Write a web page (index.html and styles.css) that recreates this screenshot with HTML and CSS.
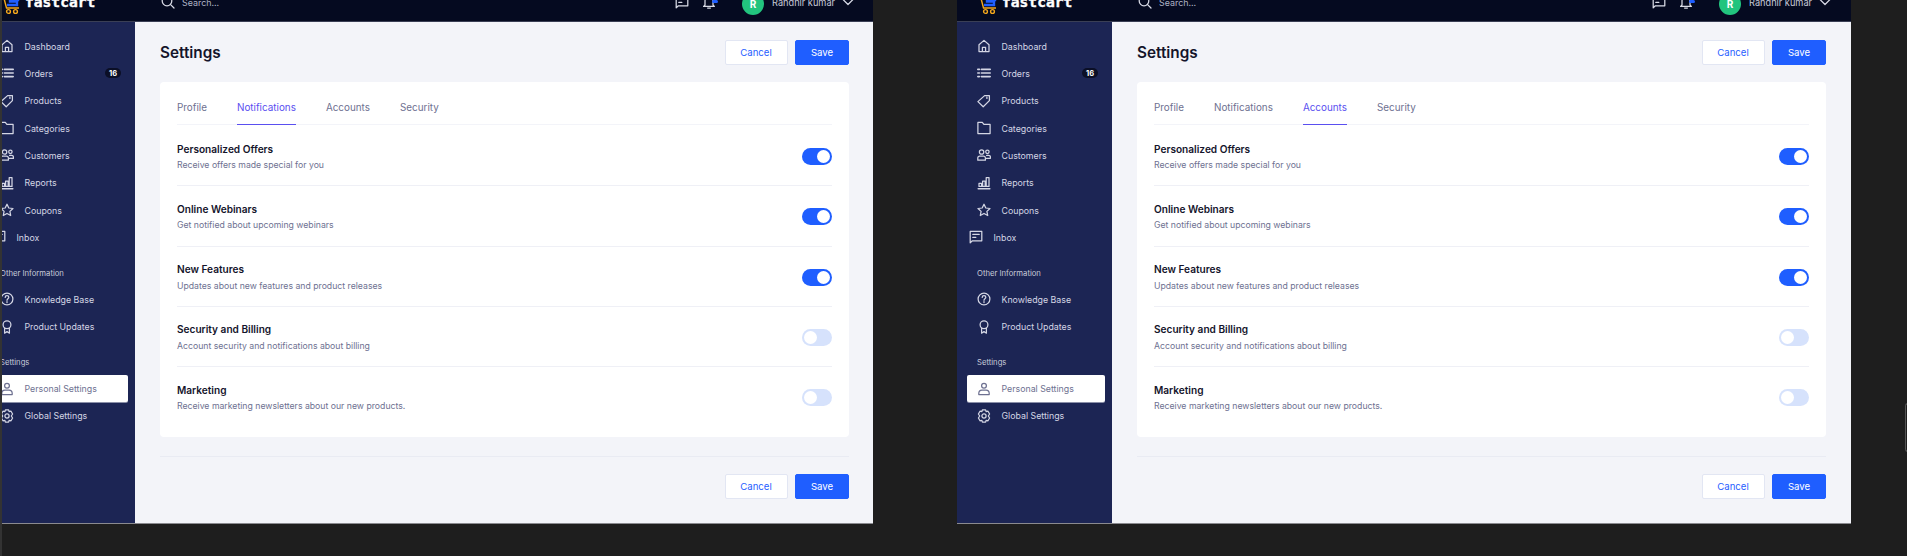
FILE: index.html

```html
<!DOCTYPE html>
<html lang="en">
<head>
    <meta charset="UTF-8">
    <title>fastcart settings</title>
    <link rel="stylesheet" href="styles.css">
</head>
<body>

<svg class="defs" width="0" height="0">
    <symbol id="i-home" viewBox="0 0 14 14"><path d="M2 12.6V5.800L7 1.400l5 4.400v6.800zM5.400 12.600V8.400h3.200v4.200"/></symbol>
    <symbol id="i-list" viewBox="0 0 14 14"><path d="M4.400 3.400h8.800M4.400 7h8.800M4.400 10.600h8.800M.8 3.400h1.600M.8 7h1.600M.8 10.600h1.600" stroke-width="1.6"/></symbol>
    <symbol id="i-tag" viewBox="0 0 14 14"><path d="M7.600 1.600h4.800v5L6.200 12.800.9 7.600zM9.900 3.200v1.200"/></symbol>
    <symbol id="i-folder" viewBox="0 0 14 14"><path d="M.9 1.400h4.400l1.600 2h6.200v9.200H.9z"/></symbol>
    <symbol id="i-users" viewBox="0 0 14 14"><circle cx="4.600" cy="4" r="2.200"/><circle cx="10.400" cy="3.800" r="1.700"/><path d="M.8 12.200V10c0-1.200 1-1.900 2-1.900h3.600c1 0 2 .7 2 1.900v2.200zM9.600 7.400h2.200c1 0 1.600.6 1.600 1.600v1.400h-4"/></symbol>
    <symbol id="i-chart" viewBox="0 0 14 14"><path d="M1.200 12.800h11.600" stroke-width="1.5"/><path d="M2 10.400V7.400h2.600v3zM5.600 10.400V5h2.600v5.400zM9.200 10.400V1.600h2.800v8.800z"/></symbol>
    <symbol id="i-star" viewBox="0 0 14 14"><path d="M7 1.200l1.800 3.800 4.200.5-3.100 2.900.8 4.100L7 10.500l-3.700 2 .8-4.100L1 5.500l4.200-.5z"/></symbol>
    <symbol id="i-chat" viewBox="0 0 14 14"><path d="M1.200 1.400h11.600v9.400H3.400L1.200 12.800zM3.800 4.400h6.400M3.800 7.400h3"/></symbol>
    <symbol id="i-help" viewBox="0 0 14 14"><circle cx="7" cy="7" r="5.900"/><path d="M5.200 5.400C5.200 4.300 6 3.700 7 3.700s1.800.7 1.800 1.600c0 1.400-1.800 1.500-1.800 3M7 9.600v1"/></symbol>
    <symbol id="i-award" viewBox="0 0 14 14"><circle cx="7" cy="4.800" r="3.900"/><path d="M4.600 8.200v5l2.400-1.600 2.400 1.600v-5"/></symbol>
    <symbol id="i-user" viewBox="0 0 14 14"><circle cx="7" cy="3.800" r="2.400"/><path d="M1.800 12.600v-1.400c0-2 1.600-3.200 3.200-3.200h4c1.600 0 3.200 1.200 3.200 3.200v1.400z"/></symbol>
    <symbol id="i-gear" viewBox="0 0 14 14"><path d="M5.400.9h3.200l.5 1.800 1.900-.5L12.600 5l-1.300 2 1.300 2-1.600 2.800-1.900-.5-.5 1.800H5.400l-.5-1.800-1.900.5L1.400 9l1.300-2-1.300-2L3 2.200l1.900.5z"/><circle cx="7" cy="7" r="2.100"/></symbol>
    <symbol id="i-search" viewBox="0 0 14 14"><circle cx="6" cy="6" r="4.800"/><path d="M9.600 9.600l3.400 3.400"/></symbol>
    <symbol id="i-bell" viewBox="0 0 14 14"><path d="M3 10V6a4 4 0 0 1 8 0v4l1.400 1.400H1.600zM5.600 13h2.800"/></symbol>
    <symbol id="i-chevron" viewBox="0 0 14 14"><path d="M2 4.500l5 5 5-5"/></symbol>
    <symbol id="i-cart" viewBox="0 0 22 22"><path class="cart-frame" d="M1 1.500h3l3.500 13.500h12.500"/><path class="cart-load" d="M6 3.500h13v3.500h-8v1.500h7v3.500H8"/><circle class="cart-frame" cx="9.500" cy="18.500" r="1.900"/><circle class="cart-frame" cx="16.500" cy="18.500" r="1.900"/></symbol>
</svg>

<!-- left window, its first 22px are cut off by the capture -->
<div class="capture capture-left">
    <div class="window">
        <header class="topbar">
            <div class="brand"><svg class="cart"><use href="#i-cart"/></svg><span class="brand-name">fastcart</span></div>
            <div class="search"><svg class="ico"><use href="#i-search"/></svg><span>Search...</span></div>
            <div class="topbar-right">
                <svg class="ico"><use href="#i-chat"/></svg>
                <span class="bell"><svg class="ico"><use href="#i-bell"/></svg><i class="bell-dot"></i></span>
                <span class="avatar">R</span>
                <span class="username">Randhir kumar</span>
                <svg class="ico chevron"><use href="#i-chevron"/></svg>
            </div>
        </header>
        <div class="body">
            <nav class="sidebar">
                <a class="nav-item"><svg class="ico"><use href="#i-home"/></svg>Dashboard</a>
                <a class="nav-item"><svg class="ico"><use href="#i-list"/></svg>Orders<span class="count">16</span></a>
                <a class="nav-item"><svg class="ico"><use href="#i-tag"/></svg>Products</a>
                <a class="nav-item"><svg class="ico"><use href="#i-folder"/></svg>Categories</a>
                <a class="nav-item"><svg class="ico"><use href="#i-users"/></svg>Customers</a>
                <a class="nav-item"><svg class="ico"><use href="#i-chart"/></svg>Reports</a>
                <a class="nav-item"><svg class="ico"><use href="#i-star"/></svg>Coupons</a>
                <a class="nav-item nav-inbox"><svg class="ico"><use href="#i-chat"/></svg>Inbox</a>
                <div class="nav-label">Other Information</div>
                <a class="nav-item"><svg class="ico"><use href="#i-help"/></svg>Knowledge Base</a>
                <a class="nav-item"><svg class="ico"><use href="#i-award"/></svg>Product Updates</a>
                <div class="nav-label">Settings</div>
                <a class="nav-item active"><svg class="ico"><use href="#i-user"/></svg>Personal Settings</a>
                <a class="nav-item"><svg class="ico"><use href="#i-gear"/></svg>Global Settings</a>
            </nav>
            <main class="main">
                <div class="page-head">
                    <h1>Settings</h1>
                    <div class="actions"><button class="btn">Cancel</button><button class="btn btn-primary">Save</button></div>
                </div>
                <section class="card">
                    <div class="tabs">
                        <a class="tab">Profile</a>
                        <a class="tab tab-active">Notifications</a>
                        <a class="tab">Accounts</a>
                        <a class="tab">Security</a>
                    </div>
                    <div class="row">
                        <div><h3>Personalized Offers</h3><p>Receive offers made special for you</p></div>
                        <span class="toggle on"></span>
                    </div>
                    <div class="row">
                        <div><h3>Online Webinars</h3><p>Get notified about upcoming webinars</p></div>
                        <span class="toggle on"></span>
                    </div>
                    <div class="row">
                        <div><h3>New Features</h3><p>Updates about new features and product releases</p></div>
                        <span class="toggle on"></span>
                    </div>
                    <div class="row">
                        <div><h3>Security and Billing</h3><p>Account security and notifications about billing</p></div>
                        <span class="toggle"></span>
                    </div>
                    <div class="row">
                        <div><h3>Marketing</h3><p>Receive marketing newsletters about our new products.</p></div>
                        <span class="toggle"></span>
                    </div>
                </section>
                <div class="page-foot">
                    <div class="actions"><button class="btn">Cancel</button><button class="btn btn-primary">Save</button></div>
                </div>
            </main>
        </div>
    </div>
</div>

<div class="capture capture-right">
    <div class="window">
        <header class="topbar">
            <div class="brand"><svg class="cart"><use href="#i-cart"/></svg><span class="brand-name">fastcart</span></div>
            <div class="search"><svg class="ico"><use href="#i-search"/></svg><span>Search...</span></div>
            <div class="topbar-right">
                <svg class="ico"><use href="#i-chat"/></svg>
                <span class="bell"><svg class="ico"><use href="#i-bell"/></svg><i class="bell-dot"></i></span>
                <span class="avatar">R</span>
                <span class="username">Randhir kumar</span>
                <svg class="ico chevron"><use href="#i-chevron"/></svg>
            </div>
        </header>
        <div class="body">
            <nav class="sidebar">
                <a class="nav-item"><svg class="ico"><use href="#i-home"/></svg>Dashboard</a>
                <a class="nav-item"><svg class="ico"><use href="#i-list"/></svg>Orders<span class="count">16</span></a>
                <a class="nav-item"><svg class="ico"><use href="#i-tag"/></svg>Products</a>
                <a class="nav-item"><svg class="ico"><use href="#i-folder"/></svg>Categories</a>
                <a class="nav-item"><svg class="ico"><use href="#i-users"/></svg>Customers</a>
                <a class="nav-item"><svg class="ico"><use href="#i-chart"/></svg>Reports</a>
                <a class="nav-item"><svg class="ico"><use href="#i-star"/></svg>Coupons</a>
                <a class="nav-item nav-inbox"><svg class="ico"><use href="#i-chat"/></svg>Inbox</a>
                <div class="nav-label">Other Information</div>
                <a class="nav-item"><svg class="ico"><use href="#i-help"/></svg>Knowledge Base</a>
                <a class="nav-item"><svg class="ico"><use href="#i-award"/></svg>Product Updates</a>
                <div class="nav-label">Settings</div>
                <a class="nav-item active"><svg class="ico"><use href="#i-user"/></svg>Personal Settings</a>
                <a class="nav-item"><svg class="ico"><use href="#i-gear"/></svg>Global Settings</a>
            </nav>
            <main class="main">
                <div class="page-head">
                    <h1>Settings</h1>
                    <div class="actions"><button class="btn">Cancel</button><button class="btn btn-primary">Save</button></div>
                </div>
                <section class="card">
                    <div class="tabs">
                        <a class="tab">Profile</a>
                        <a class="tab">Notifications</a>
                        <a class="tab tab-active">Accounts</a>
                        <a class="tab">Security</a>
                    </div>
                    <div class="row">
                        <div><h3>Personalized Offers</h3><p>Receive offers made special for you</p></div>
                        <span class="toggle on"></span>
                    </div>
                    <div class="row">
                        <div><h3>Online Webinars</h3><p>Get notified about upcoming webinars</p></div>
                        <span class="toggle on"></span>
                    </div>
                    <div class="row">
                        <div><h3>New Features</h3><p>Updates about new features and product releases</p></div>
                        <span class="toggle on"></span>
                    </div>
                    <div class="row">
                        <div><h3>Security and Billing</h3><p>Account security and notifications about billing</p></div>
                        <span class="toggle"></span>
                    </div>
                    <div class="row">
                        <div><h3>Marketing</h3><p>Receive marketing newsletters about our new products.</p></div>
                        <span class="toggle"></span>
                    </div>
                </section>
                <div class="page-foot">
                    <div class="actions"><button class="btn">Cancel</button><button class="btn btn-primary">Save</button></div>
                </div>
            </main>
        </div>
    </div>
</div>

<div class="edge-handle"></div>

</body>
</html>
```

FILE: styles.css

```css
* { box-sizing: border-box; }
html, body { margin: 0; height: 100%; }
body { background: #1e1e1e; font-family: Inter, sans-serif; overflow: hidden; position: relative; border-left: 2px solid #333; }
h1, h3, p { margin: 0; }
.defs { position: absolute; }

/* windows on the desktop */
.capture { position: absolute; top: 0; height: 524px; overflow: hidden; }
.capture-left { left: 0; width: 871px; }
.capture-right { left: 955px; width: 894px; }
.capture-left .window { margin-left: -22px; }
.window { width: 894px; height: 524px; display: flex; flex-direction: column; background: #f3f4f9; border-bottom: 1px solid #8a8a8f; }

/* top bar, cut by the top of the capture */
.topbar { height: 22px; flex: none; background: #050a20; display: flex; color: #d9dbe6; font-size: 8.9px; border-bottom: 1px solid #3a3f55; }
.brand { width: 155px; padding-left: 19px; display: flex; align-items: flex-start; }
.cart { width: 22px; height: 22px; margin-top: -7px; flex: none; fill: none; }
.cart-frame { stroke: #f5a81c; stroke-width: 1.4; fill: none; }
.cart-load { stroke: #1f5eff; stroke-width: 2.4; fill: none; }
.brand-name { margin-left: 4px; margin-top: -8px; font-family: "DejaVu Sans Mono", monospace; font-weight: 700; font-size: 14.6px; line-height: 20px; color: #fff; -webkit-text-stroke: .4px #fff; }
.ico { width: 14px; height: 14px; flex: none; fill: none; stroke: currentColor; stroke-width: 1.25; stroke-linejoin: round; stroke-linecap: round; }
.search { display: flex; align-items: center; gap: 7px; height: 14px; margin-top: -5px; margin-left: 26px; }
.search span { color: #aeb2c4; }
.topbar-right { margin-left: auto; padding-right: 19px; display: flex; align-items: center; height: 14px; margin-top: -5px; }
.bell { position: relative; display: flex; margin-left: 13px; }
.bell-dot { position: absolute; right: -2px; top: 5px; width: 6px; height: 3px; background: #1f5eff; border-radius: 2px; }
.avatar { width: 22px; height: 22px; margin-left: 26px; border-radius: 50%; background: #22c47e; color: #fff; font-weight: 700; font-size: 10px; display: flex; align-items: center; justify-content: center; margin-top: 4px; flex: none; }
.username { margin-left: 8px; font-size: 9.2px; color: #c8cbd9; }
.chevron { margin-left: 6px; }

/* sidebar */
.body { flex: 1; display: flex; min-height: 0; }
.sidebar { width: 155px; flex: none; background: #1c2554; padding: 10.5px 7px 0 10px; color: #d4d6e4; font-size: 8.8px; }
.nav-item { height: 27.33px; display: flex; align-items: center; gap: 10.5px; padding-left: 10px; border-radius: 2px; }
.nav-inbox { padding-left: 2px; }
.count { margin-left: auto; margin-right: 7px; width: 16px; height: 10px; border-radius: 5px; background: #0b0f26; color: #fff; font-size: 7.5px; font-weight: 700; display: flex; align-items: center; justify-content: center; }
.nav-label { font-size: 7.7px; line-height: 12px; margin: 17px 0 5.6px 10px; color: #c8cbd9; }
.active { background: #fff; color: #6e7191; box-shadow: 0 1px 0 #8a8fa8; }

/* main column */
.main { flex: 1; background: #f3f4f9; padding: 18px 25px 0; }
.page-head { display: flex; justify-content: space-between; align-items: center; height: 25px; }
h1 { font-size: 15.3px; font-weight: 600; color: #14142b; }
.actions { display: flex; gap: 7.5px; }
.btn { width: 63px; height: 25px; padding: 0; border: 1px solid #e2e6f3; border-radius: 2px; background: #fff; color: #1f5eff; font: 9.6px Inter, sans-serif; }
.btn-primary { width: 54px; background: #1f5eff; border-color: #1f5eff; color: #fff; }

.card { margin-top: 17px; height: 355px; background: #fff; border-radius: 4px; padding: 0 17px; }
.tabs { height: 42.5px; margin-bottom: 1.5px; display: flex; gap: 30px; border-bottom: 1px solid #f3f4f9; }
.tab { height: 42.5px; line-height: 51px; font-size: 9.9px; color: #6e7191; }
.tab-active { color: #5a4ff0; border-bottom: 1px solid #5a4ff0; }
.row { height: 60.3px; padding-top: 15.5px; display: flex; justify-content: space-between; align-items: flex-start; border-bottom: 1px solid #eff0f6; }
.row:last-child { border-bottom: 0; }
h3 { font-size: 10.1px; font-weight: 600; line-height: 14px; color: #14142b; }
p { font-size: 8.7px; line-height: 13px; margin-top: 3.5px; color: #6e7191; }

.toggle { width: 30px; height: 17px; margin-top: 6.5px; border-radius: 9px; background: #d6e2fc; padding: 2px; display: flex; }
.toggle::after { content: ""; width: 13px; height: 13px; border-radius: 50%; background: #fff; }
.toggle.on { background: #1f5eff; justify-content: flex-end; }

.page-foot { margin-top: 19px; padding-top: 17px; border-top: 1.5px solid #e9ebf3; display: flex; justify-content: flex-end; }

.edge-handle { position: absolute; left: 1903px; top: 403px; width: 4px; height: 49px; border: 1px solid #555; border-right: 0; border-radius: 3px 0 0 3px; }
```
